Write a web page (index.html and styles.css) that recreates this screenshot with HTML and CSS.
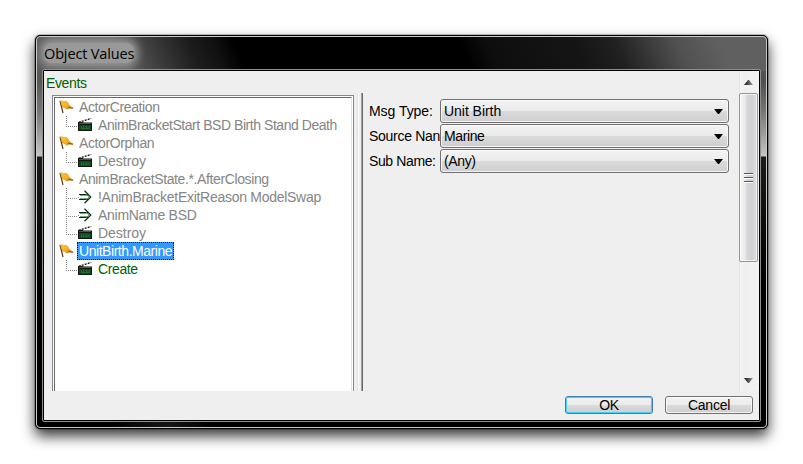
FILE: index.html
```
<!DOCTYPE html>
<html lang="en">
<head>
<meta charset="utf-8">
<title>Object Values</title>
<link rel="stylesheet" href="styles.css">
</head>
<body>
<svg class="defs" width="0" height="0" aria-hidden="true">
  <defs>
    <linearGradient id="gold" x1="0" y1="0" x2="1" y2="1">
      <stop offset="0" stop-color="#ffc936"/><stop offset=".6" stop-color="#f4ac1c"/><stop offset="1" stop-color="#b96f16"/>
    </linearGradient>
    <linearGradient id="arrow"><stop offset="0" stop-color="#111"/><stop offset="1" stop-color="#999"/></linearGradient>
    <symbol id="flag" viewBox="0 0 14 14">
      <path d="M.5 .8 3.500 13" stroke="#5a3510" stroke-width="1.200" fill="none"/>
      <path d="M.8 1C2.500 .2 3.500 2 5 1.500S8 1.500 8.800 3.500 10.500 6 13.600 8C12 8.600 11 8 9.800 8.200 8.500 8.500 8 9.800 6.500 8.800 5.500 7 4 7.800 2.600 6.500Z" fill="url(#gold)" stroke="#c08428" stroke-width=".5"/>
      <path d="M8.500 7.200 13.600 8.300" stroke="#7a4a16" stroke-width=".8"/>
    </symbol>
    <symbol id="clap" viewBox="0 0 14 14">
      <path d="M.8 4.300 13.200 .5" stroke="#111" stroke-width="1.300" stroke-dasharray="2 1.100"/>
      <path d="M0 4H4L6 4.500H14V13H0Z" fill="#101a12"/>
      <path d="M1 7H13V12H1Z" fill="#0e4a1e"/>
      <path d="M1 5.500H13" stroke="#46584b"/>
      <path d="M3.500 8V11M5.500 8V11M7.500 8 9.500 11M9.500 8 7.500 11M11 8V11M3 10.500H11.500" stroke="#1b7c2f" stroke-width=".7"/>
    </symbol>
    <symbol id="cond" viewBox="0 0 14 14">
      <path d="M1 4.500H10.500M1 9.500H10.500M6.500 .8 12.800 7 6.500 13.200" stroke="#0b2a10" stroke-width="1.200" fill="none"/>
      <path d="M2 5.500H10M0 7.500H1M2 8.500H10M8 4 11 7 8 10" stroke="#4f9258" stroke-width=".8" fill="none"/>
    </symbol>
  </defs>
</svg>
<div class="window">
  <div class="frame">
    <header class="titlebar"><span class="title">Object Values</span></header>
    <main class="client">
      <div class="view">
        <section class="events">
          <h1>Events</h1>
          <div class="tree"><div class="tree-inner">
            <div class="row"><svg class="flag"><use href="#flag"/></svg><span>ActorCreation</span></div>
            <div class="row child last"><i></i><svg><use href="#clap"/></svg><span class="tight">AnimBracketStart BSD Birth Stand Death</span></div>
            <div class="row"><svg class="flag"><use href="#flag"/></svg><span>ActorOrphan</span></div>
            <div class="row child last"><i></i><svg><use href="#clap"/></svg><span class="wide">Destroy</span></div>
            <div class="row"><svg class="flag"><use href="#flag"/></svg><span>AnimBracketState.*.AfterClosing</span></div>
            <div class="row child"><i></i><svg><use href="#cond"/></svg><span class="loose">!AnimBracketExitReason ModelSwap</span></div>
            <div class="row child"><i></i><svg><use href="#cond"/></svg><span class="loose">AnimName BSD</span></div>
            <div class="row child last"><i></i><svg><use href="#clap"/></svg><span class="wide">Destroy</span></div>
            <div class="row"><svg class="flag"><use href="#flag"/></svg><span class="selected tight">UnitBirth.Marine</span></div>
            <div class="row child last"><i></i><svg><use href="#clap"/></svg><span class="own">Create</span></div>
          </div></div>
        </section>
        <div class="splitter"></div>
        <section class="fields">
          <div class="field"><label class="wide">Msg Type:</label><div class="combo"><span class="wide">Unit Birth</span><svg viewBox="0 0 9 5"><path d="M0 0H9L5 5H4Z"/></svg></div></div>
          <div class="field"><label class="loose">Source Nan</label><div class="combo"><span>Marine</span><svg viewBox="0 0 9 5"><path d="M0 0H9L5 5H4Z"/></svg></div></div>
          <div class="field"><label>Sub Name:</label><div class="combo"><span>(Any)</span><svg viewBox="0 0 9 5"><path d="M0 0H9L5 5H4Z"/></svg></div></div>
        </section>
        <div class="scrollbar">
          <div class="step"><svg viewBox="0 0 9 5"><path d="M0 5H9L5 0H4Z" fill="url(#arrow)"/></svg></div>
          <div class="thumb"><b></b><b></b><b></b></div>
          <div class="step down"><svg viewBox="0 0 9 5"><path d="M0 0H9L5 5H4Z" fill="url(#arrow)"/></svg></div>
        </div>
      </div>
      <footer class="buttons"><button class="primary">OK</button><button>Cancel</button></footer>
    </main>
  </div>
</div>
</body>
</html>
```
FILE: styles.css
```
* { box-sizing: border-box; }
body {
  margin: 0;
  padding: 35px;
  height: 464px;
  overflow: hidden;
  background: #fff;
  font: 14px/18px "Liberation Sans", sans-serif;
  letter-spacing: -.38px;
  color: #000;
}
.defs { position: absolute; }
.tight { letter-spacing: -.45px; }
.loose { letter-spacing: -.28px; }
.wide { letter-spacing: -.04px; }
.window {
  width: 733px;
  height: 394px;
  border: 1px solid #000;
  border-radius: 5px;
  background: #000;
  box-shadow: 0 0 0 1px rgba(0,0,0,.2), 0 7px 14px 0 rgba(0,0,0,.8);
}
.frame {
  height: 392px;
  border: 1px solid #c8cac8;
  border-radius: 4px;
  padding: 0 5px 5px;
  background:
    linear-gradient(65deg, #5c5c5c 0, #606060 80px, #3c3c3c 115px, #1c1c1c 150px, #121212 170px, #000 190px, #000 395px, #0e0e0e 420px, #151515 500px, #202020 535px, #505050 590px, #606060 630px) top / 100% 34px no-repeat,
    linear-gradient(#5c5c5c 0, #585858 45px, #777 75px, #c4c4c4 119px, #1c1c1c 120px, #0c0c0c 190px, #000 260px) left / 5px 100% no-repeat,
    linear-gradient(#5f5f5f 0, #505050 45px, #777 75px, #c4c4c4 119px, #1c1c1c 120px, #0c0c0c 190px, #000 260px) right / 5px 100% no-repeat,
    linear-gradient(90deg, #000 10%, #161616 18%, #000 24%) bottom / 100% 5px no-repeat,
    #000;
}
.titlebar {
  height: 32px;
  margin: 0 -5px;
  padding: 6px 0 0 7px;
  overflow: hidden;
  border-radius: 3px 3px 0 0;
}
.title {
  display: inline-block;
  height: 20px;
  border-radius: 8px;
  background: #999;
  box-shadow: 0 0 9px 4px #999;
  font: 14.500px/22px "Open Sans", sans-serif;
  letter-spacing: -.14px;
}
.client {
  width: 719px;
  height: 353px;
  border: 1px solid #8e8e8e;
  border-radius: 2px;
  box-shadow: inset 0 0 0 1px #000;
  padding: 1px;
  background: #efefef;
  background-clip: content-box;
}
.view { display: flex; height: 320px; }
.events { width: 313px; padding: 3px 3px 0 8px; }
h1 { margin: 0 0 3px -6px; font: inherit; color: #006100; }
.tree {
  width: 302px;
  height: 296px;
  border: 1px solid #828790;
  border-bottom: 0;
  padding: 1px 1px 0;
  background: #fff;
}
.tree-inner {
  height: 294px;
  border: 1px solid #696969;
  border-right-color: #e3e3e3;
  border-bottom: 0;
  padding: 0 0 0 3px;
}
.row { display: flex; height: 18px; color: #858585; white-space: nowrap; }
.row svg { width: 14px; height: 14px; margin: 2px 5px 0 0; flex: none; }
.row .flag { margin: 2px 4px 0 1px; width: 15px; }
.row span { padding: 0 2px; margin-left: -1px; }
.row i { position: relative; flex: none; width: 12px; margin-left: 8px; }
.row i::before {
  content: "";
  position: absolute;
  inset: 0 11px 0 0;
  background: repeating-linear-gradient(#888 0 1px, transparent 1px 2px);
}
.row.last i::before { bottom: 8px; }
.row i::after {
  content: "";
  position: absolute;
  inset: 10px 0 7px 0;
  background: repeating-linear-gradient(90deg, #888 0 1px, transparent 1px 2px);
}
.row .selected { background: #39f; color: #fff; outline: 1px dotted #111; outline-offset: -1px; }
.row .own { color: #006100; }
.splitter {
  width: 6px;
  height: 298px;
  margin-top: 22px;
  background: linear-gradient(90deg, #e0e0e0 0 1px, #fff 1px 2px, #efefef 2px 4px, #a0a0a0 4px 5px, #696969 5px);
}
.fields { flex: 1; padding: 28px 10px 0 6px; }
.field { display: flex; height: 25px; }
.field label { width: 71px; padding-top: 3px; overflow: hidden; white-space: nowrap; }
.combo {
  display: flex;
  align-items: center;
  justify-content: space-between;
  width: 289px;
  height: 24px;
  border: 1px solid #707070;
  border-radius: 3px;
  padding: 0 5px 0 3px;
  background: linear-gradient(#f3f3f3, #ebebeb 48%, #dbdbdb 49%, #cfcfcf);
  box-shadow: inset 0 0 0 1px rgba(255,255,255,.75);
}
.combo svg { width: 9px; height: 5px; }
.scrollbar {
  display: flex;
  flex-direction: column;
  width: 20px;
  border-left: 1px solid #e4e4e4;
  background: linear-gradient(90deg, #f8f8f8, #efefef 3px, #f2f2f2);
}
.step { display: flex; align-items: center; justify-content: center; height: 22px; padding-right: 2px; }
.step svg { width: 9px; height: 5px; }
.step.down { margin-top: auto; }
.thumb {
  display: flex;
  flex-direction: column;
  align-items: center;
  justify-content: center;
  gap: 2px;
  width: 19px;
  height: 169px;
  margin-left: -1px;
  border: 1px solid #979797;
  border-radius: 2px;
  background: linear-gradient(90deg, #f5f5f5, #ebebed 5px, #d6d7da 7px, #d0d1d5 12px, #dedfe2);
  box-shadow: inset 0 0 0 1px rgba(255,255,255,.65);
}
.thumb b { width: 9px; height: 2px; border-top: 1px solid #555; border-bottom: 1px solid #fff; }
.buttons { display: flex; justify-content: flex-end; gap: 12px; padding: 5px 6px 0 0; }
button {
  width: 88px;
  height: 18px;
  border: 1px solid #707070;
  border-radius: 3px;
  padding: 0;
  font: 14px/16px "Liberation Sans", sans-serif;
  letter-spacing: -.25px;
  color: #000;
  background: linear-gradient(#f3f3f3, #ebebeb 48%, #dbdbdb 49%, #cfcfcf);
  box-shadow: inset 0 0 0 1px rgba(255,255,255,.75);
}
.primary { border-color: #3c7fb1; box-shadow: inset 0 0 0 1px #45d0f7; }
```
